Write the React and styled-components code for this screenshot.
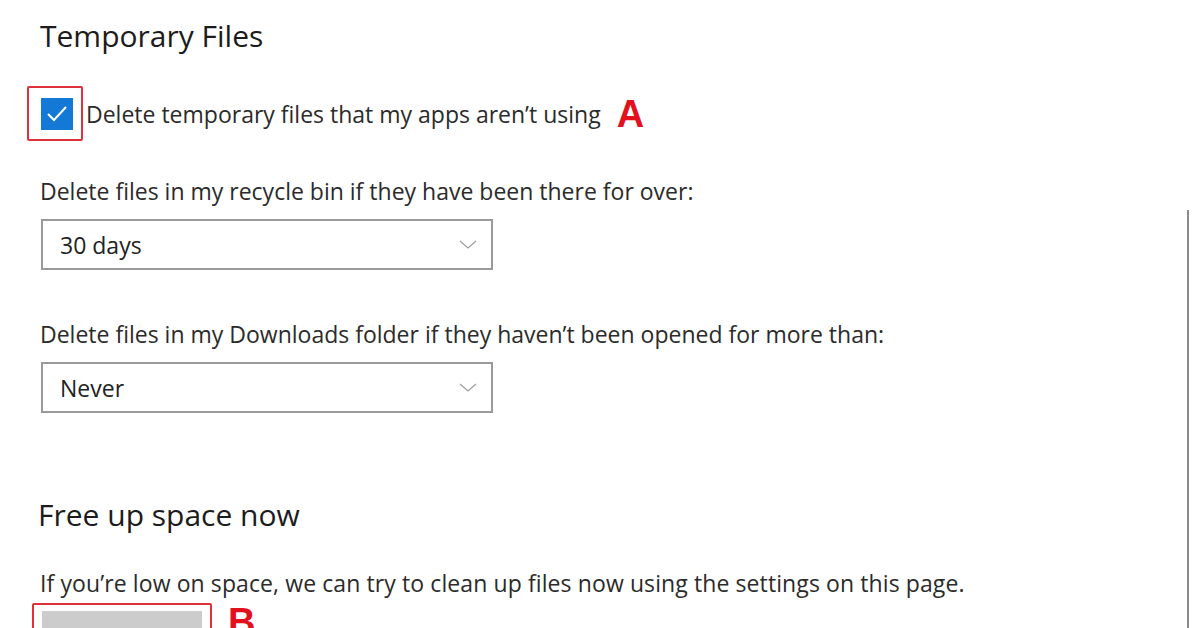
import React from 'react';
import styled, { createGlobalStyle } from 'styled-components';

const GlobalStyle = createGlobalStyle`
  html, body {
    margin: 0;
    padding: 0;
    height: 628px;
    overflow: hidden;
    background: #fff;
  }
  body {
    font-family: 'Open Sans', 'Noto Sans', sans-serif;
    color: #2b2b2b;
  }
`;

const Page = styled.div`
  position: relative;
  height: 628px;
  overflow: hidden;
  padding: 14px 0 0 40px;
  box-sizing: border-box;
`;

const Heading = styled.h2`
  margin: ${(p) => p.$top || 0}px 0 0 ${(p) => p.$shift || 0}px;
  font-weight: 400;
  font-size: 30px;
  line-height: 44px;
  color: #1c1c1c;
`;

const CheckRow = styled.div`
  display: flex;
  align-items: center;
  margin: 28px 0 0 -13px;
`;

const Highlight = styled.div`
  border: 2px solid #e0303a;
  border-radius: 2px;
  padding: ${(p) => p.$pad || '10px'};
  display: flex;
  align-items: center;
`;

const CheckBox = styled.div`
  width: 32px;
  height: 32px;
  background: #1479d6;
  display: flex;
  align-items: center;
  justify-content: center;
`;

const RowText = styled.span`
  margin-left: 3px;
  font-size: 23px;
  color: #2b2b2b;
`;

const Marker = styled.span`
  font-family: 'Liberation Sans', Arial, sans-serif;
  font-weight: 700;
  font-size: 38px;
  color: #e3101e;
  margin-left: ${(p) => p.$gap}px;
  line-height: 1;
`;

const Label = styled.p`
  margin: ${(p) => p.$top}px 0 0;
  font-size: 23px;
  line-height: 30px;
`;

const Select = styled.div`
  margin: 13px 0 0 1px;
  width: 452px;
  height: 51px;
  box-sizing: border-box;
  border: 2px solid #9a9a9a;
  display: flex;
  align-items: center;
  justify-content: space-between;
  padding: 0 13px 0 17px;
  font-size: 23px;
  color: #222;
  background: #fff;
`;

const Paragraph = styled.p`
  margin: 31px 0 0;
  font-size: 23px;
  line-height: 30px;
  letter-spacing: 0.1px;
`;

const ButtonRow = styled.div`
  display: flex;
  align-items: flex-start;
  margin: 5px 0 0 -8px;
`;

const GrayButton = styled.div`
  width: 160px;
  height: 40px;
  background: #cccccc;
`;

const ScrollLine = styled.div`
  position: absolute;
  right: 7px;
  top: 210px;
  bottom: 0;
  width: 2px;
  background: #8c8c8c;
`;

function Chevron() {
  return (
    <svg width="20" height="12" viewBox="0 0 20 12">
      <path d="M2 2 L10 9 L18 2" fill="none" stroke="#a0a0a0" strokeWidth="1.3" />
    </svg>
  );
}

function Check() {
  return (
    <svg width="24" height="20" viewBox="0 0 24 20">
      <path d="M3 10 L9 16 L21 3" fill="none" stroke="#fff" strokeWidth="2" />
    </svg>
  );
}

export default function App() {
  return (
    <Page>
      <GlobalStyle />
      <Heading>Temporary Files</Heading>

      <CheckRow>
        <Highlight $pad="10px 8px 9px 12px">
          <CheckBox>
            <Check />
          </CheckBox>
        </Highlight>
        <RowText>Delete temporary files that my apps aren’t using</RowText>
        <Marker $gap={16}>A</Marker>
      </CheckRow>

      <Label $top={35}>Delete files in my recycle bin if they have been there for over:</Label>
      <Select>
        <span>30 days</span>
        <Chevron />
      </Select>

      <Label $top={49}>Delete files in my Downloads folder if they haven’t been opened for more than:</Label>
      <Select>
        <span>Never</span>
        <Chevron />
      </Select>

      <Heading $shift={-2} $top={80}>Free up space now</Heading>
      <Paragraph>If you’re low on space, we can try to clean up files now using the settings on this page.</Paragraph>

      <ButtonRow>
        <Highlight $pad="6px 8px">
          <GrayButton />
        </Highlight>
        <Marker $gap={16}>B</Marker>
      </ButtonRow>

      <ScrollLine />
    </Page>
  );
}
